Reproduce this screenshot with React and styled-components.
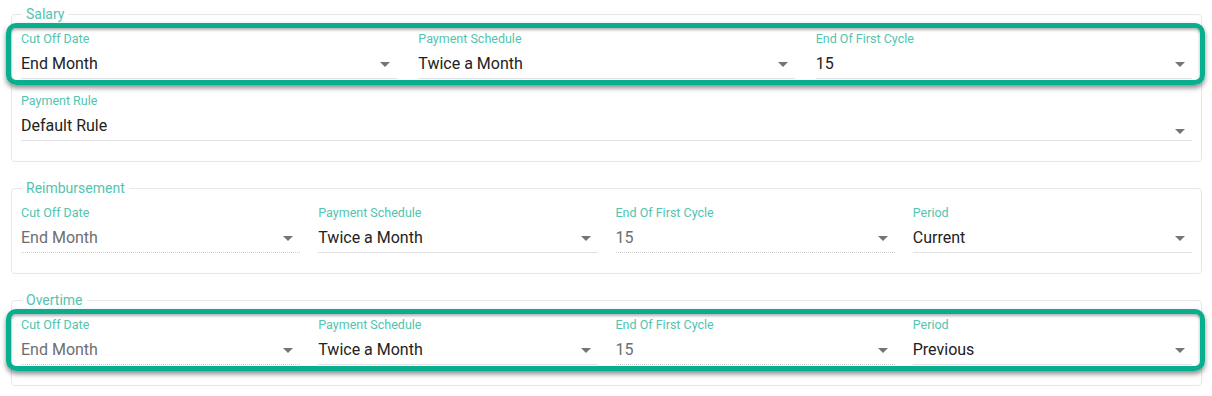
import React from "react";
import styled, { createGlobalStyle } from "styled-components";

const GlobalStyle = createGlobalStyle`
  html, body {
    margin: 0;
    padding: 0;
    background: #ffffff;
  }

  body {
    font-family: Roboto, "Noto Sans", Arial, sans-serif;
  }
`;

const Page = styled.div`
  display: flex;
  flex-direction: column;
  gap: 18px;
  width: 1191px;
  padding: 6px 0 0 11px;
`;

const Group = styled.fieldset`
  margin: 0;
  padding: 10px 9px 20px 9px;
  border: 1px solid #e6e6ec;
  border-radius: 4px;
  min-width: 0;
`;

const Legend = styled.legend`
  padding: 0 4px;
  margin-left: 1px;
  font-size: 14px;
  line-height: 16px;
  color: #52c4b0;
`;

const Rows = styled.div`
  display: flex;
  flex-direction: column;
  gap: 15px;
`;

const Row = styled.div`
  position: relative;
  display: grid;
  grid-template-columns: repeat(${(p) => p.cols}, 1fr);
  column-gap: ${(p) => (p.cols > 3 ? "18px" : "21px")};
`;

const Highlight = styled.div`
  position: absolute;
  top: -9px;
  bottom: -6px;
  left: -15px;
  right: -13px;
  border: 5px solid #09ae8e;
  border-radius: 10px;
  box-shadow: 0 3px 5px rgba(0, 0, 0, 0.45), inset 0 2px 3px rgba(0, 0, 0, 0.3);
  pointer-events: none;
`;

const Field = styled.div`
  display: flex;
  flex-direction: column;
  gap: 8px;
  min-width: 0;
`;

const Label = styled.span`
  font-size: 12.5px;
  line-height: 14px;
  color: #52c4b0;
`;

const Control = styled.div`
  position: relative;
  display: flex;
  align-items: ${(p) => (p.low ? "flex-end" : "center")};
  justify-content: space-between;
  padding: 0 7px 4px 0;
  border-bottom: 1px ${(p) => (p.disabled ? "dotted #cfcfcf" : "solid #e2e2e6")};
`;

const Value = styled.span`
  font-size: 16px;
  line-height: 20px;
  color: ${(p) => (p.disabled ? "#6e6e6e" : "#222222")};
  white-space: nowrap;
`;

const Caret = styled.span`
  width: 0;
  height: 0;
  border-left: 5px solid transparent;
  border-right: 5px solid transparent;
  border-top: 5px solid #757575;
  margin-bottom: ${(p) => (p.low ? "2px" : "0")};
`;

const SelectField = ({ label, value, disabled, low }) => (
  <Field>
    <Label>{label}</Label>
    <Control disabled={disabled} low={low}>
      <Value disabled={disabled}>{value}</Value>
      <Caret low={low} />
    </Control>
  </Field>
);

const App = () => {
  return (
    <>
      <GlobalStyle />
      <Page>
        <Group>
          <Legend>Salary</Legend>
          <Rows>
            <Row cols={3}>
              <SelectField label="Cut Off Date" value="End Month" />
              <SelectField label="Payment Schedule" value="Twice a Month" />
              <SelectField label="End Of First Cycle" value="15" />
              <Highlight />
            </Row>
            <Row cols={1}>
              <SelectField label="Payment Rule" value="Default Rule" low />
            </Row>
          </Rows>
        </Group>

        <Group>
          <Legend>Reimbursement</Legend>
          <Row cols={4}>
            <SelectField label="Cut Off Date" value="End Month" disabled />
            <SelectField label="Payment Schedule" value="Twice a Month" />
            <SelectField label="End Of First Cycle" value="15" disabled />
            <SelectField label="Period" value="Current" />
          </Row>
        </Group>

        <Group>
          <Legend>Overtime</Legend>
          <Row cols={4}>
            <SelectField label="Cut Off Date" value="End Month" disabled />
            <SelectField label="Payment Schedule" value="Twice a Month" />
            <SelectField label="End Of First Cycle" value="15" disabled />
            <SelectField label="Period" value="Previous" />
            <Highlight />
          </Row>
        </Group>
      </Page>
    </>
  );
};

export default App;
